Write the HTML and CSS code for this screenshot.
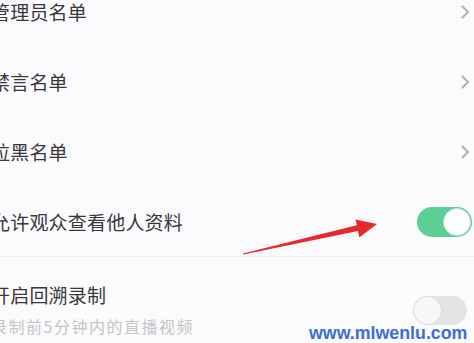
FILE: index.html
```html
<!DOCTYPE html>
<html lang="zh-CN">
<head>
<meta charset="utf-8">
<link rel="stylesheet" href="styles.css">
</head>
<body>
<div class="screen">
  <div class="list">
    <div class="row">
      <span class="title">管理员名单</span>
      <svg class="chev" viewBox="0 0 9 14" width="9" height="14"><path d="M1.5 1.5 L7 7 L1.5 12.5" fill="none" stroke="#b4b4b6" stroke-width="2.2" stroke-linecap="round" stroke-linejoin="round"/></svg>
    </div>
    <div class="row">
      <span class="title">禁言名单</span>
      <svg class="chev" viewBox="0 0 9 14" width="9" height="14"><path d="M1.5 1.5 L7 7 L1.5 12.5" fill="none" stroke="#b4b4b6" stroke-width="2.2" stroke-linecap="round" stroke-linejoin="round"/></svg>
    </div>
    <div class="row">
      <span class="title">拉黑名单</span>
      <svg class="chev" viewBox="0 0 9 14" width="9" height="14"><path d="M1.5 1.5 L7 7 L1.5 12.5" fill="none" stroke="#b4b4b6" stroke-width="2.2" stroke-linecap="round" stroke-linejoin="round"/></svg>
    </div>
    <div class="row row-divider">
      <span class="title">允许观众查看他人资料</span>
      <div class="toggle on"><div class="knob"></div></div>
    </div>
    <div class="row row-sub">
      <div class="texts">
        <span class="title">开启回溯录制</span>
        <span class="sub">录制前5分钟内的直播视频</span>
      </div>
      <div class="toggle off"><div class="knob"></div></div>
    </div>
  </div>

  <svg class="arrow" viewBox="0 0 474 343" width="474" height="343">
    <polygon points="243,253.5 356.8,225.3 355.5,219.4 377,224 359.3,237.5 358,231.1 243.3,254.6" fill="#e62a2b"/>
  </svg>

  <div class="watermark">www.mlwenlu.com</div>
</div>
</body>
</html>
```

FILE: styles.css
```css
html, body {
  margin: 0;
  padding: 0;
  background: #fbfafd;
}
.screen {
  position: relative;
  width: 474px;
  height: 343px;
  overflow: hidden;
  background: #fbfafd;
  font-family: "Noto Sans CJK SC", "Noto Sans", sans-serif;
}
.list {
  margin-top: -23px;
  display: flex;
  flex-direction: column;
}
.row {
  height: 70px;
  display: flex;
  align-items: center;
  justify-content: space-between;
  padding-left: 0;
  padding-right: 4px;
}
.row-divider {
  border-bottom: 1px solid #ececee;
  height: 69px;
}
.title {
  font-size: 19px;
  color: #38383a;
  margin-left: -9px;
  letter-spacing: 0.2px;
  line-height: 24px;
}
.chev {
  display: block;
  margin-right: 0;
}
.toggle {
  width: 55px;
  height: 30px;
  border-radius: 15px;
  position: relative;
  box-sizing: border-box;
}
.toggle.on {
  background: #5ccf95;
  margin-right: -2px;
}
.toggle.on .knob {
  position: absolute;
  right: 1px;
  top: 1px;
  width: 28px;
  height: 28px;
  border-radius: 50%;
  background: #ffffff;
  box-sizing: border-box;
  border: 1px solid #b9ead0;
}
.toggle.off {
  background: #e4e4e6;
  width: 54px;
  height: 29px;
  margin-right: 3px;
}
.toggle.off .knob {
  position: absolute;
  left: 1px;
  top: 1px;
  width: 27px;
  height: 27px;
  border-radius: 50%;
  background: #f7f7f8;
  box-shadow: 0 0 2px rgba(0,0,0,0.12);
}
.row-sub {
  height: 90px;
  align-items: flex-start;
  padding-top: 26px;
  box-sizing: border-box;
}
.row-sub .toggle {
  margin-top: 13px;
}
.texts {
  display: flex;
  flex-direction: column;
  gap: 9px;
}
.sub {
  font-size: 16px;
  color: #c4c4c6;
  margin-left: -9px;
  letter-spacing: 1.5px;
  line-height: 20px;
}
.arrow {
  position: absolute;
  left: 0;
  top: 0;
  pointer-events: none;
}
.watermark {
  position: absolute;
  left: 309px;
  top: 323px;
  font-family: "Liberation Sans", Arial, sans-serif;
  font-weight: bold;
  font-size: 17.8px;
  line-height: 20px;
  color: #3b6fd6;
}
```
